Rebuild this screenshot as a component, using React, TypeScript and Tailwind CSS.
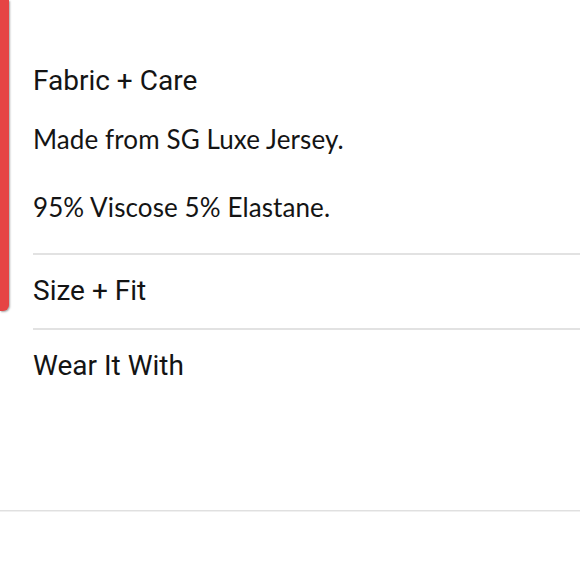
const sections = ['Size + Fit', 'Wear It With'];

export default function App() {
  return (
    <div className="relative w-full h-[580px] bg-white overflow-hidden">
      {/* red side tab */}
      <div className="absolute left-0 top-0 w-[9px] h-[311px] bg-[#e64444] rounded-br-[6px] shadow-[1px_1px_2px_rgba(0,0,0,0.35)]" />

      <div className="h-[510px] pl-[33px] pt-[65px] text-[#141414]">
        <h2 className="font-['Roboto',sans-serif] text-[28px] leading-[32px]">Fabric + Care</h2>
        <div className="font-['Lato',sans-serif] text-[26px] leading-[32px] tracking-[0.1px]">
          <p className="mt-[26px]">Made from SG Luxe Jersey.</p>
          <p className="mt-[36px]">95% Viscose 5% Elastane.</p>
        </div>

        <div className="mt-[30px]">
          {sections.map(title => (
            <div key={title}>
              <div className="h-[2px] bg-[#e2e2e2]" />
              <h2 className="pt-[20px] pb-[21px] font-['Roboto',sans-serif] text-[28px] leading-[32px]">{title}</h2>
            </div>
          ))}
        </div>
      </div>

      <div className="h-[2px] bg-[#e0e0e0] border-b border-[#f0f0f0]" />
    </div>
  );
}
